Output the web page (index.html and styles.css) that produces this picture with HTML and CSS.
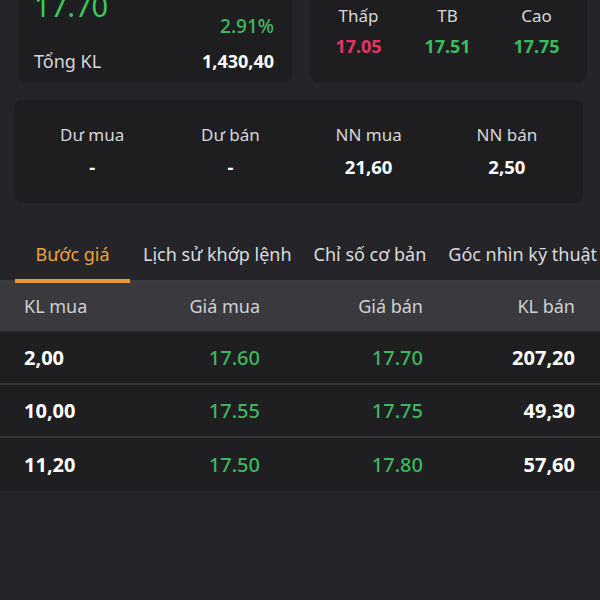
FILE: index.html
```html
<!DOCTYPE html>
<html lang="vi">
<head>
<meta charset="utf-8">
<link rel="stylesheet" href="styles.css">
</head>
<body>
<div class="top">
  <div class="card card-price">
    <div class="price-row">
      <span class="price">17.70</span>
      <span class="pct">2.91%</span>
    </div>
    <div class="kl-row">
      <span class="label">Tổng KL</span>
      <span class="val">1,430,40</span>
    </div>
  </div>
  <div class="card card-range">
    <div class="col"><span class="label">Thấp</span><span class="num red">17.05</span></div>
    <div class="col"><span class="label">TB</span><span class="num green">17.51</span></div>
    <div class="col"><span class="label">Cao</span><span class="num green">17.75</span></div>
  </div>
</div>

<div class="card card-nn">
  <div class="col"><span class="label">Dư mua</span><span class="val">-</span></div>
  <div class="col"><span class="label">Dư bán</span><span class="val">-</span></div>
  <div class="col"><span class="label">NN mua</span><span class="val">21,60</span></div>
  <div class="col"><span class="label">NN bán</span><span class="val">2,50</span></div>
</div>

<div class="tabs">
  <div class="tab active">Bước giá</div>
  <div class="tab">Lịch sử khớp lệnh</div>
  <div class="tab">Chỉ số cơ bản</div>
  <div class="tab">Góc nhìn kỹ thuật</div>
</div>

<div class="book">
  <div class="brow head">
    <span>KL mua</span><span>Giá mua</span><span>Giá bán</span><span>KL bán</span>
  </div>
  <div class="brow">
    <span class="w">2,00</span><span class="g">17.60</span><span class="g">17.70</span><span class="w">207,20</span>
  </div>
  <div class="brow">
    <span class="w">10,00</span><span class="g">17.55</span><span class="g">17.75</span><span class="w">49,30</span>
  </div>
  <div class="brow">
    <span class="w">11,20</span><span class="g">17.50</span><span class="g">17.80</span><span class="w">57,60</span>
  </div>
</div>
</body>
</html>
```

FILE: styles.css
```css
* { box-sizing: border-box; }
html, body {
  margin: 0;
  background: #252529;
  font-family: "Noto Sans", "Open Sans", sans-serif;
  color: #d6d6d8;
  overflow: hidden;
}
body { width: 600px; height: 600px; }

.card {
  background: #1e1e21;
  border-radius: 8px;
}

.top {
  display: flex;
  gap: 18px;
  margin-top: -20px;
  padding-left: 18px;
}

.card-price {
  width: 274px;
  height: 102px;
  padding: 0 18px 0 16px;
  display: flex;
  flex-direction: column;
}
.price-row {
  display: flex;
  justify-content: space-between;
  align-items: flex-end;
  height: 58px;
}
.price {
  font-size: 29px;
  line-height: 1;
  color: #36c95b;
  margin-bottom: 18px;
}
.pct {
  font-size: 19px;
  color: #3fbb5e;
  line-height: 24px;
  font-weight: 500;
}
.kl-row {
  display: flex;
  justify-content: space-between;
  align-items: center;
  margin-top: 11px;
  font-size: 18px;
}
.kl-row .label { color: #d8d8d8; }
.val { color: #ffffff; font-weight: 700; }

.card-range {
  width: 277px;
  height: 102px;
  display: flex;
  padding: 24px 6px 0 4px;
}
.col {
  flex: 1;
  display: flex;
  flex-direction: column;
  align-items: center;
  font-size: 17px;
}
.card-range .col { gap: 7px; }
.num { font-weight: 700; font-size: 18px; }
.red { color: #e2365e; }
.green { color: #3cbb5d; }

.card-nn {
  margin: 18px 17px 0 14px;
  height: 103px;
  display: flex;
  padding: 23px 7px 0 9px;
}
.card-nn .col { gap: 8px; }
.card-nn .val { font-size: 18.5px; }

.tabs {
  display: flex;
  margin-top: 35px;
  box-shadow: inset 0 -3px 0 #3c3c40;
  white-space: nowrap;
  height: 45px;
}
.tab {
  font-size: 18px;
  color: #dcdcdc;
  padding: 0 11px;
  line-height: 33px;
  flex-shrink: 0;
}
.tab.active {
  color: #eba23e;
  margin-left: 15px;
  margin-right: 2px;
  width: 115px;
  padding: 0;
  text-align: center;
  border-bottom: 4px solid #e59a38;
}

.book { display: flex; flex-direction: column; }
.brow {
  display: grid;
  grid-template-columns: 100px 136px 163px 152px;
  padding: 0 25px 0 24px;
  height: 53px;
  align-items: center;
  background: #1f1f22;
  border-bottom: 2px solid #353539;
  font-size: 20px;
}
.brow span { text-align: right; }
.brow span:first-child { text-align: left; }
.brow.head {
  background: #3a3a3e;
  height: 49px;
  border-bottom: 1px solid #2a2a2d;
  font-size: 18px;
  color: #d0d0d2;
  padding-bottom: 3px;
}
.brow:last-child { border-bottom: none; }
.w { color: #ffffff; font-weight: 700; }
.g { color: #3cb85c; font-weight: 500; }
```
